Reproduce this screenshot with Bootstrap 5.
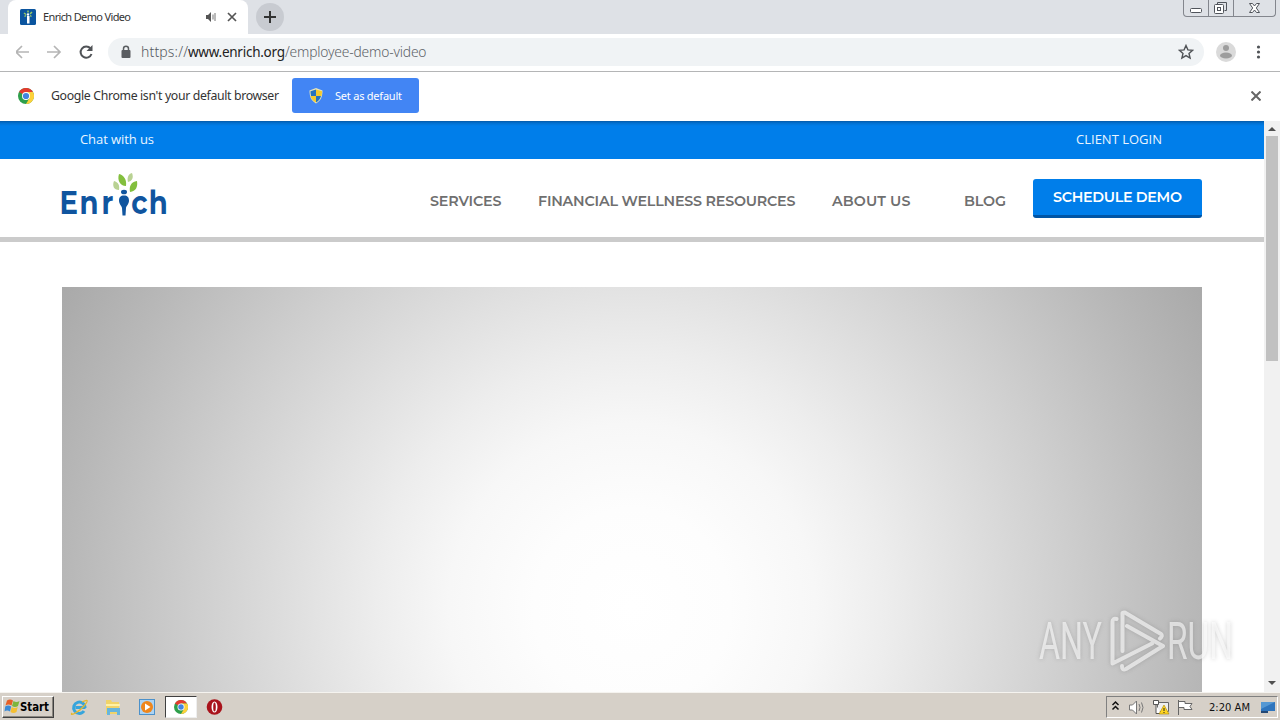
<!DOCTYPE html>
<html lang="en">
<head>
  <meta charset="UTF-8" />
  <meta name="viewport" content="width=device-width, initial-scale=1.0"/>
  <title>Enrich Demo Video</title>
  <link href="https://cdn.jsdelivr.net/npm/bootstrap@5.3.3/dist/css/bootstrap.min.css" rel="stylesheet">
  <style>
    body { width: 1280px; height: 720px; font-family: "Noto Sans", "Open Sans", sans-serif; background: #fff; color: #333; line-height: 1; }
    svg { display: block; flex: none; }
    svg text { white-space: pre; }

    /* browser chrome */
    .tab-strip { height: 34px; background: #dee1e6; }
    .page-tab { width: 240px; height: 34px; margin-left: 8px; padding: 0 7px 0 12px; background: #fff; border-radius: 8px 8px 0 0; }
    .tab-close { margin: 0 4px 0 10px; }
    .new-tab { width: 28px; height: 28px; margin: 3px 0 0 8px; border-radius: 50%; background: #c8cbd1; }
    .win-buttons { width: 93px; height: 17px; margin-right: 4px; border: 1px solid #83868d; border-top: 0; border-radius: 0 0 4px 4px; }
    .toolbar { height: 38px; padding-bottom: 2px; border-bottom: 1px solid #b4b5b6; }
    .address { height: 28px; width: 1096px; margin-left: 12px; padding: 0 10px 0 12px; border-radius: 14px; background: #f0f3f5; }
    .avatar { width: 20px; height: 20px; margin-left: 12px; }
    .menu-dots { margin-right: 18px; }
    .info-bar { height: 49px; padding-bottom: 2px; }
    .info-logo { margin-left: 18px; }
    .info-close { margin-right: 19px; }
    .set-default { width: 127px; height: 35px; background: #4285f4; border-radius: 3px; padding: 0 16px 0 17px; color: #fff; }

    /* site */
    .viewport { height: 571px; }
    .top-strip { height: 38px; padding: 0 102px 0 80px; background: linear-gradient(#0459a8 0, #0270d0 2px, #007eea 5px); color: #fff; }
    .site-header { height: 83px; border-bottom: 5px solid #cbcbcb; padding: 0 62px 0 56px; }
    .nav-text { color: #6f6f6f; }
    .demo-btn { width: 169px; height: 39px; margin: 20px 0 0 23px; background: #007eea; border-radius: 3px; border-bottom: 3px solid #0055a5; }
    .video { width: 1140px; height: 405px; margin: 45px 0 0 62px; background: radial-gradient(circle 654px at 570px 320px, #fff 0, #fdfdfd 15%, #f7f7f7 28%, #ededed 39%, #e1e1e1 50%, #cecece 67%, #b8b8b8 86%, #a9a9a9 100%); }
    .scroll-col { width: 16px; background: #f1f1f1; }
    .scroll-thumb { width: 12px; height: 225px; background: #c1c1c1; }
    .watermark { left: 1030px; top: 600px; filter: drop-shadow(0 0 2px rgba(90,90,90,.45)); }

    /* taskbar */
    .task-bar { height: 28px; background: #d6d0c8; border-top: 1px solid #f5f3ef; }
    .start-btn { width: 52px; height: 22px; margin: 3px 0 0 2px; border: 1px solid; border-color: #fff #404040 #404040 #fff; box-shadow: inset -1px -1px #8a867f; }
    .task-active { width: 32px; height: 22px; margin: 3px 0 0 -1px; background: #fff; border: 1px solid; border-color: #404040 #eee #eee #404040; }
    .tray { width: 172px; height: 22px; margin: 3px 2px 0 0; border: 1px solid; border-color: #808080 #fff #fff #808080; }
  </style>
</head>
<body class="overflow-hidden d-flex flex-column position-relative">

<!-- shared symbols -->
<svg width="0" height="0" class="position-absolute">
  <symbol id="chrome" viewBox="0 0 20 20">
    <circle cx="10" cy="10" r="10" fill="#2e9f4b"/>
    <path d="M10 10 1.300 5A10 10 0 0 1 18.700 5H10z" fill="#e33b2e"/>
    <path d="M10 5h8.700A10 10 0 0 1 10 20l4.400-7.500z" fill="#fdd13a"/>
    <circle cx="10" cy="10" r="5" fill="#fff"/>
    <circle cx="10" cy="10" r="3.900" fill="#4285e0"/>
  </symbol>
</svg>

<!-- Tabs -->
<div class="tab-strip d-flex">
  <div class="page-tab d-flex align-items-center">
    <svg width="16" height="16"><rect width="16" height="16" rx="1.500" fill="#0b559f"/><path d="M7 7h2.500v7.500h-2.500z" fill="#fff"/><circle cx="8" cy="5.500" r="1.200" fill="#fff"/><path d="M4 4l2 1.500M8 1.500v2M12 3l-2 2M4.500 7.500l1.500-1M11.500 7.500l-1.500-1" stroke="#9ccb63" stroke-width="1.500"/></svg>
    <svg width="100" height="20" class="ms-1"><text x="3" y="14" font-size="11" textLength="88" fill="#333">Enrich Demo Video</text></svg>
    <svg width="12" height="12" class="ms-auto"><path d="M1 4h2l3-3v10L3 8H1z" fill="#555"/><path d="M8 3.500v5M10 2v8" stroke="#777"/></svg>
    <svg width="10" height="10" class="tab-close"><path d="M1 1l8 8M9 1l-8 8" stroke="#555" stroke-width="1.700"/></svg>
  </div>
  <div class="new-tab d-flex align-items-center justify-content-center">
    <svg width="12" height="12"><path d="M6 0v12M0 6h12" stroke="#333" stroke-width="2"/></svg>
  </div>
  <div class="win-buttons ms-auto">
    <svg width="92" height="16" fill="none" stroke="#50545b"><path d="M24.500 0v16M49.500 0v16" stroke="#83868d"/><rect x="6.500" y="8.500" width="11" height="4" rx="1" fill="#fff"/><path d="M33.500 4.500v-2h9v8h-2"/><rect x="30.500" y="4.500" width="9" height="9" rx="1" fill="#fff"/><rect x="33.500" y="7.500" width="3" height="3"/><path d="M65.500 3.500h3l2 2.500 2-2.500h3l-3.200 4.500 3.200 4.500h-3l-2-2.500-2 2.500h-3l3.200-4.500z" fill="#fff"/></svg>
  </div>
</div>

<!-- Toolbar -->
<div class="toolbar d-flex align-items-center">
  <svg width="80" height="20" class="ms-3" fill="none" stroke="#b5b5b5" stroke-width="1.700"><path d="M13 10H0M6 4l-6 6 6 6"/><path d="M31 10h13M38 4l6 6-6 6"/><path d="M74.500 6.500A5.600 5.600 0 1 0 75.500 12" stroke="#505357" stroke-width="2"/><path d="M76.500 3v6h-6z" fill="#505357" stroke="none"/></svg>
  <div class="address d-flex align-items-center">
    <svg width="12" height="14"><rect x="1.500" y="5" width="9" height="8" rx="1" fill="#5a5d61"/><path d="M3.500 6V3.800a2.500 2.500 0 0 1 5 0V6" fill="none" stroke="#5a5d61" stroke-width="1.500"/></svg>
    <svg width="300" height="24"><text x="9" y="17" font-size="14" font-weight="300" textLength="47" fill="#555a60">https://</text><text x="56" y="17" font-size="13.500" textLength="97" fill="#222">www.enrich.org</text><text x="153" y="17" font-size="13.800" font-weight="300" textLength="141.500" fill="#5d6267">/employee-demo-video</text></svg>
    <svg width="16" height="16" class="ms-auto"><path d="M8 1.500l1.900 4.400 4.700.4-3.600 3.100 1.100 4.700L8 11.600l-4.100 2.500L5 9.400 1.400 6.300l4.700-.4z" fill="none" stroke="#505357" stroke-width="1.400"/></svg>
  </div>
  <svg class="avatar" viewBox="0 0 20 20"><circle cx="10" cy="10" r="10" fill="#dadada"/><circle cx="10" cy="6" r="3" fill="#9d9d9d"/><ellipse cx="10" cy="13.500" rx="6" ry="3" fill="#9d9d9d"/></svg>
  <svg width="6" height="16" class="menu-dots ms-auto" fill="#505357"><circle cx="2.500" cy="3" r="1.600"/><circle cx="2.500" cy="8" r="1.600"/><circle cx="2.500" cy="13" r="1.600"/></svg>
</div>

<!-- Default browser bar -->
<div class="info-bar d-flex align-items-center">
  <svg width="16" height="16" class="info-logo"><use href="#chrome"/></svg>
  <svg width="258" height="24"><text x="17" y="16" font-size="12.300" textLength="228" fill="#333">Google Chrome isn't your default browser</text></svg>
  <div class="set-default d-flex align-items-center">
    <svg width="14" height="16"><path d="M7 0l6.500 2.500c0 6-1.500 10-6.500 13C2 12.500.5 8.500.5 2.500z" fill="#e8e6bb"/><path d="M7 1.500V8h5.500c.3-2 .5-3 .5-4.700zM7 8H1.500c.7 3 2.500 5 5.500 6.500z" fill="#f4ca2d"/><path d="M7 1.500V8H2C1.700 6 1.500 5 1.500 3.300zM7 8h5c-.7 3-2.300 5-5 6.500z" fill="#2673bd"/></svg>
    <svg width="80" height="20"><text x="12" y="14" font-size="11" textLength="67" fill="#fff">Set as default</text></svg>
  </div>
  <svg width="10" height="10" class="info-close ms-auto"><path d="M.5 .5l9 9M9.500 .5l-9 9" stroke="#666" stroke-width="2"/></svg>
</div>

<!-- Page -->
<div class="viewport d-flex">
  <div class="flex-grow-1">
    <div class="top-strip d-flex align-items-center justify-content-between">
      <svg width="80" height="20"><text x="0" y="14" font-family="Open Sans" font-size="13" textLength="74" fill="#eaf5ff">Chat with us</text></svg>
      <svg width="87" height="20"><text x="1" y="14" font-family="Open Sans" font-size="13" textLength="86" fill="#eaf5ff">CLIENT LOGIN</text></svg>
    </div>
    <div class="site-header d-flex">
      <svg width="116" height="70" fill="#10559f">
        <g transform="translate(6 0)">
          <text transform="scale(.86 1)" x="-3 20.500 46 80.500 101" y="55" font-family="Montserrat, Lato" font-weight="700" font-size="32">Enrch</text>
          <ellipse cx="62" cy="33" rx="3" ry="2.300"/><path d="M62 36.500c3.500 0 5 2 5 5 0 3.500-2.500 5-3 7.500l-.5 7.500h-3l-.5-7.500c-.5-2.500-3-4-3-7.500 0-3 1.500-5 5-5z"/>
          <path d="M57 15c5 1 8 6 7 12-6 0-9-6-7-12zM75 22c1 6-1 10-7 11-1-6 1-10 7-11z" fill="#83bf3d"/><path d="M70 14c2 5 0 8-4 9-1-4 0-8 4-9zM52 22c4 1 6 4 5 9-5 0-7-4-5-9z" fill="#b9d293"/>
        </g>
      </svg>
      <svg width="604" height="60" class="nav-text ms-auto" font-family="Montserrat, Inter" font-weight="600" font-size="14.300" fill="currentColor">
        <text x="24" y="47" textLength="71.500">SERVICES</text>
        <text x="132" y="47" textLength="257.500">FINANCIAL WELLNESS RESOURCES</text>
        <text x="426" y="47" textLength="78.500">ABOUT US</text>
        <text x="558" y="47" textLength="42">BLOG</text>
      </svg>
      <div class="demo-btn d-flex justify-content-center">
        <svg width="130" height="34" font-family="Montserrat, Inter" font-weight="600" font-size="14.300"><text x="0" y="23" textLength="129" fill="#fff">SCHEDULE DEMO</text></svg>
      </div>
    </div>
    <div class="video"></div>
  </div>
  <div class="scroll-col d-flex flex-column align-items-center">
    <svg width="16" height="15"><path d="M4 10l4-4 4 4z" fill="#505050"/></svg>
    <div class="scroll-thumb"></div>
    <svg width="16" height="17" class="mt-auto"><path d="M4 6l4 4 4-4z" fill="#505050"/></svg>
  </div>
</div>

<!-- Taskbar -->
<div class="task-bar d-flex">
  <div class="start-btn">
    <svg width="50" height="20"><path d="M4 3.500q3-2 6 0l-1.500 5q-3-2-6 0z" fill="#e65f26"/><path d="M10.500 4q3 2 6 0l-1.500 5q-3 2-6 0z" fill="#7db53c"/><path d="M2.200 9.500q3-2 6 0L7 14.500q-3-2-5.500 0z" fill="#3b8ad6"/><path d="M8.700 10q3 2 6 0l-1.200 5q-3 2-6 0z" fill="#f5bf32"/><text x="17" y="14" font-family="DejaVu Sans" font-weight="700" font-size="11.500" textLength="29" lengthAdjust="spacingAndGlyphs" fill="#000">Start</text></svg>
  </div>
  <svg width="96" height="22" class="ms-3 mt-1">
    <g fill="none"><path d="M15.500 10.500H5.500M15 11a5.700 5.700 0 1 0-1 3" stroke="#37a5dc" stroke-width="3"/><path d="M2 16c-3 4 7-1 12-7s4-7-2-4" stroke="#e5b72d" stroke-width="1.300"/></g>
    <path d="M36 3h5l1 2h7v12H36z" fill="#f0d36a"/><path d="M36 7h14v2H36z" fill="#fff1a5"/><path d="M37 11h13v7h-3v-3h-7v3h-3z" fill="#67b5dd"/>
    <rect x="69.500" y="2.500" width="15" height="15" fill="#acd3f3" stroke="#4c91ca"/><circle cx="77" cy="10" r="6" fill="#ef861c"/><path d="M75 6.500v7l5.500-3.500z" fill="#fff"/>
  </svg>
  <div class="task-active d-flex align-items-center justify-content-center"><svg width="14" height="14"><use href="#chrome"/></svg></div>
  <svg width="18" height="20" class="ms-2 mt-1"><circle cx="9.500" cy="10" r="7.800" fill="#a9131b"/><ellipse cx="9.500" cy="10" rx="3" ry="5.500" fill="#fff"/><ellipse cx="9.500" cy="10" rx="1.300" ry="4.500" fill="#a9131b"/></svg>
  <div class="tray ms-auto">
    <svg width="170" height="20">
      <path d="M5.500 8l3-3 3 3M5.500 12.500l3-3 3 3" fill="none" stroke="#111" stroke-width="1.500"/>
      <path d="M22.500 8h3l4-4v13l-4-4h-3z" fill="#fff" stroke="#777"/><path d="M32 7q2 3.500 0 7M34.500 5.500q3 5 0 10" fill="none" stroke="#777"/>
      <path d="M50.500 5.500h11v9h-11z" fill="#eee" stroke="#666"/><path d="M46.500 3.500h5v4h-5zM49 8v8.500h5" fill="#fff" stroke="#555"/><path d="M57 8l5 9h-10z" fill="#ffd521" stroke="#a98500" stroke-width=".6"/><path d="M57 11v3M57 15v1" stroke="#222"/>
      <path d="M71.500 3v15M72 4.500h6v2h7l-2 3 2 3h-8v-2h-5" fill="#fff" stroke="#666"/>
      <text x="102" y="14" font-family="DejaVu Sans" font-size="11" textLength="41" lengthAdjust="spacingAndGlyphs" fill="#111">2:20 AM</text>
      <path d="M154 5h14v9h-14z" fill="#2f75bd"/><path d="M154 5h14l-14 7z" fill="#5598d3"/><path d="M154 14h7v2h-7z" fill="#234875"/>
    </svg>
  </div>
</div>

<!-- Watermark over the page -->
<svg class="watermark position-absolute" width="214" height="80">
  <g font-family="Roboto" font-weight="400" font-size="51" fill="#fff" fill-opacity=".6">
    <text x="9" y="59" textLength="63" lengthAdjust="spacingAndGlyphs">ANY</text>
    <text x="137" y="59" textLength="66" lengthAdjust="spacingAndGlyphs">RUN</text>
  </g>
  <path d="M86.500 19q-4-1-4 3v41.500L122 43.500M92.500 51V13q2-1 4 .5L131 34q2 2-1 4.500M97 26l36 20-37 23q-4 2-4-3" fill="none" stroke="#fff" stroke-opacity=".62" stroke-width="4" stroke-linejoin="round" stroke-linecap="round"/>
</svg>

<script src="https://cdn.jsdelivr.net/npm/bootstrap@5.3.3/dist/js/bootstrap.bundle.min.js"></script>
</body>
</html>
